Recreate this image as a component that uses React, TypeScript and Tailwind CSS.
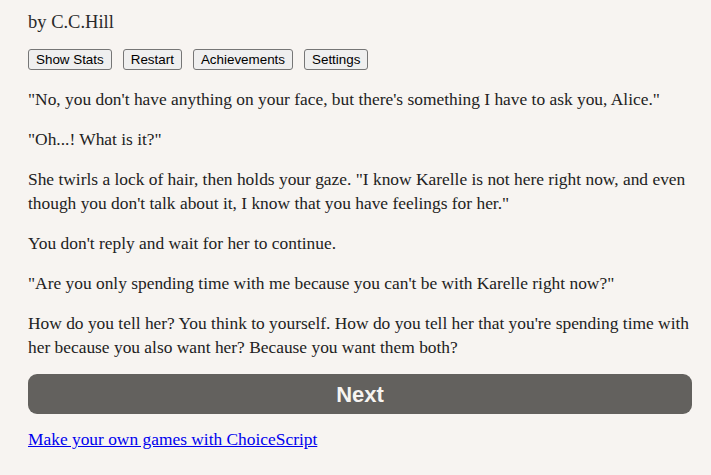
const paragraphs = [
  `"No, you don't have anything on your face, but there's something I have to ask you, Alice."`,
  `"Oh...! What is it?"`,
  `She twirls a lock of hair, then holds your gaze. "I know Karelle is not here right now, and even though you don't talk about it, I know that you have feelings for her."`,
  `You don't reply and wait for her to continue.`,
  `"Are you only spending time with me because you can't be with Karelle right now?"`,
  `How do you tell her? You think to yourself. How do you tell her that you're spending time with her because you also want her? Because you want them both?`,
];

const menu = ['Show Stats', 'Restart', 'Achievements', 'Settings'];

const App = () => {
  return (
    <div className="min-h-[475px] bg-[#f7f4f1] pt-[8px] pr-[19px] pb-6 pl-[28px] font-['Liberation_Serif',serif] text-[#222]">
      <h1 className="text-[18.5px] leading-[28px] text-[#2a2a2a]">by C.C.Hill</h1>

      <div className="mt-[13px] flex gap-[11px]">
        {menu.map((label) => (
          <button
            key={label}
            className="rounded-[3px] border border-[#767676] bg-[#efefef] px-[7px] py-[1px] font-['Liberation_Sans',sans-serif] text-[13.4px] leading-[17px] text-black"
          >
            {label}
          </button>
        ))}
      </div>

      <div className="mt-[17px] flex flex-col gap-4 text-[17.4px] leading-[24px]">
        {paragraphs.map((text, i) => (
          <p key={i}>{text}</p>
        ))}
      </div>

      <button className="mt-[15px] h-[40px] w-full rounded-[9px] bg-[#63615e] font-['Liberation_Sans',sans-serif] text-[22px] font-bold text-[#f7f4f1]">
        Next
      </button>

      <p className="mt-[13px] text-[17.4px] leading-[24px]">
        <a href="#" className="text-[#0000ee] underline">
          Make your own games with ChoiceScript
        </a>
      </p>
    </div>
  );
};

export default App;
